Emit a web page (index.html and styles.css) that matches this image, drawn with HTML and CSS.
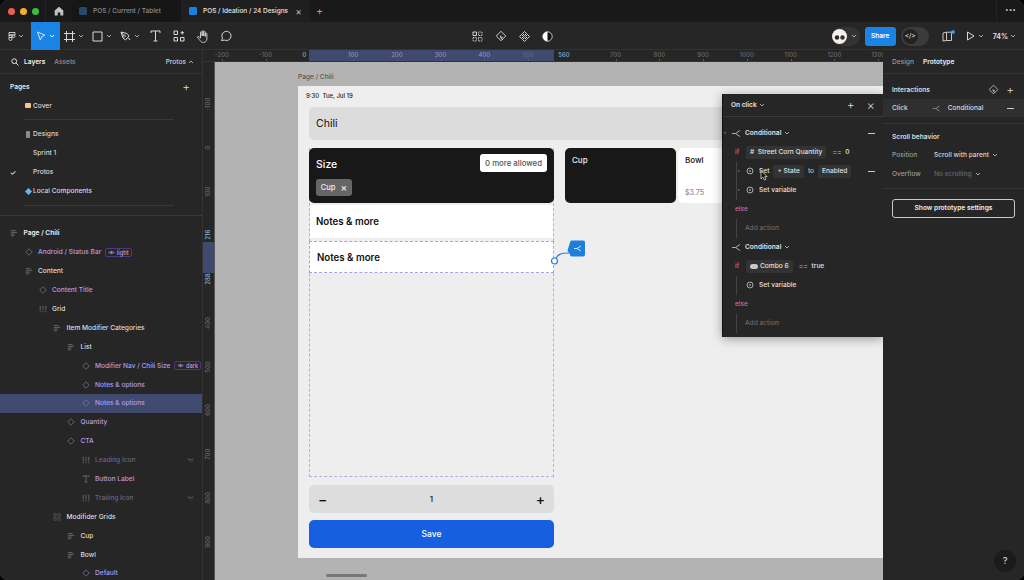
FILE: index.html
```html
<!DOCTYPE html>
<html lang="en">
<head>
    <meta charset="UTF-8">
    <title>POS / Ideation / 24 Designs</title>
    <link rel="stylesheet" href="styles.css">
</head>
<body>
    <svg class="defs" width="0" height="0">
        <symbol id="chev" viewBox="0 0 6 6"><path d="M1 2l2 2 2-2" fill="none" stroke="currentColor"/></symbol>
        <symbol id="diamond" viewBox="0 0 10 10"><path d="M5 .9L9.100 5 5 9.100.9 5z" fill="none" stroke="currentColor" stroke-width=".8"/></symbol>
        <symbol id="list" viewBox="0 0 10 10"><path d="M1 2h6M1 4.200h8M1 6.400h5M1 8.500h4" fill="none" stroke="currentColor" stroke-width=".8"/></symbol>
        <symbol id="bars" viewBox="0 0 10 10"><path d="M1.500 1v8M5 1v8M8.500 1v8" fill="none" stroke="currentColor" stroke-width=".8" stroke-dasharray="5 1"/></symbol>
        <symbol id="grid" viewBox="0 0 10 10"><path d="M1 1h3v3H1zM6 1h3v3H6zM1 6h3v3H1zM6 6h3v3H6z" fill="none" stroke="currentColor" stroke-width=".8" stroke-dasharray="1 .7"/></symbol>
        <symbol id="tee" viewBox="0 0 10 10"><path d="M1.500 2.500V1.200h7v1.300M5 1.200v7.600M3.500 8.800h3" fill="none" stroke="currentColor" stroke-width=".8"/></symbol>
        <symbol id="eye" viewBox="0 0 10 10"><path d="M1 5q4-4 8 0-4 4-8 0z" fill="none" stroke="currentColor" stroke-width=".8"/><circle cx="5" cy="5" r="1.300" fill="currentColor"/></symbol>
        <symbol id="hide" viewBox="0 0 10 6"><path d="M1 1q4 4 8 0M2 3l-1 1M5 4v1.500M8 3l1 1" fill="none" stroke="currentColor" stroke-width=".8"/></symbol>
        <symbol id="split" viewBox="0 0 12 10"><path d="M1 5h4l5-3.500M5 5l5 3.500" fill="none" stroke="currentColor" stroke-width=".9"/></symbol>
        <symbol id="action" viewBox="0 0 10 10"><circle cx="5" cy="5" r="3.700" fill="none" stroke="currentColor" stroke-width=".9"/><circle cx="5" cy="5" r="1" fill="currentColor"/></symbol>
        <symbol id="resize" viewBox="0 0 14 14"><path d="M7 1.500L12.500 7 7 12.500 1.500 7z" fill="none" stroke="currentColor"/><path d="M9 8.500H6.500V6.500M6.500 8.500l2.500 3" fill="none" stroke="currentColor"/></symbol>
    </svg>

    <div class="app">
        <div class="titlebar">
            <div class="lights"><i class="red"></i><i class="yellow"></i><i class="green"></i></div>
            <div class="home">
                <svg width="10" height="10" viewBox="0 0 10 10"><path d="M5 .8L9.300 4.500V9.500H6.300V6.500H3.700V9.500H.7V4.500z" fill="#c4c4c4"/></svg>
            </div>
            <div class="tab">
                <span class="file dim"></span><span>POS / Current / Tablet</span>
            </div>
            <div class="tab active">
                <span class="file"></span><span>POS / Ideation / 24 Designs</span><b class="close">&times;</b>
            </div>
            <div class="newtab">+</div>
            <div class="more">&middot;&middot;&middot;</div>
        </div>

        <div class="toolbar">
            <div class="tools">
                <div class="tool t-main">
                    <svg width="8" height="11" viewBox="0 0 8 11"><path d="M1 1.500h6v2.500H1zM1 4h3v2.500H1zM4 5.250a1.500 1.300 0 1 0 3 0 1.500 1.300 0 1 0-3 0M1 6.500h3v1.500a1.500 1.500 0 0 1-3 0z" fill="none" stroke="#d8d8d8" stroke-width=".9"/></svg>
                    <svg class="chev"><use href="#chev"/></svg>
                </div>
                <div class="tool t-move">
                    <svg width="10" height="10" viewBox="0 0 10 10"><path d="M1.500 1l7.500 3.300-3.200 1.300L4.300 9z" fill="none" stroke="#cfe6fb"/></svg>
                    <svg class="chev"><use href="#chev"/></svg>
                </div>
                <div class="tool t-w">
                    <svg width="11" height="11" viewBox="0 0 11 11"><path d="M2.500 0v11M8.500 0v11M0 2.500h11M0 8.500h11" fill="none" stroke="#d8d8d8"/></svg>
                    <svg class="chev"><use href="#chev"/></svg>
                </div>
                <div class="tool t-w">
                    <svg width="11" height="11" viewBox="0 0 11 11"><path d="M1 1h9v9H1z" fill="none" stroke="#d8d8d8"/></svg>
                    <svg class="chev"><use href="#chev"/></svg>
                </div>
                <div class="tool t-w">
                    <svg width="11" height="11" viewBox="0 0 11 11"><path d="M1 1l6 1.500 2 2.500-3.500 4-2.500-2zM1 1l3 3.500M8 6.500l2 2.500" fill="none" stroke="#d8d8d8"/><circle cx="4.500" cy="5" r="1" fill="none" stroke="#d8d8d8" stroke-width=".7"/></svg>
                    <svg class="chev"><use href="#chev"/></svg>
                </div>
                <div class="tool t-n">
                    <svg width="11" height="12" viewBox="0 0 11 12"><path d="M1 3V1h9v2M5.500 1v10M3.500 11h4" fill="none" stroke="#d8d8d8"/></svg>
                </div>
                <div class="tool t-n">
                    <svg width="12" height="12" viewBox="0 0 12 12"><path d="M1 1h3.500v3.500H1zM1 7.500h3.500V11H1zM7.500 7.500H11V11H7.500zM9.250 1v3.500M7.500 2.750H11" fill="none" stroke="#d8d8d8"/></svg>
                </div>
                <div class="tool t-n">
                    <svg width="12" height="13" viewBox="0 0 12 13"><path d="M3.500 7V2.500a.8.8 0 0 1 1.600 0V6V1.500a.8.8 0 0 1 1.600 0V6V2.300a.8.8 0 0 1 1.600 0V6.500V4a.8.8 0 0 1 1.600 0v5c0 2-1.500 3.400-3.500 3.400-2.500 0-3-1.500-6-5.400.6-.8 1.700-.4 3.100 1z" fill="none" stroke="#d8d8d8" stroke-width=".9"/></svg>
                </div>
                <div class="tool t-n">
                    <svg width="12" height="12" viewBox="0 0 12 12"><path d="M1.500 10.500l1-2.200a4.600 4.600 0 1 1 2 1.800z" fill="none" stroke="#d8d8d8"/></svg>
                </div>
            </div>
            <div class="center-tools">
                <svg width="11" height="11" viewBox="0 0 11 11"><path d="M1 1h3.500v3.500H1z" fill="none" stroke="#e8e8e8" stroke-width=".9"/><path d="M6.500 1H10v3.500H6.500zM1 6.500h3.500V10H1zM6.500 6.500H10V10H6.500z" fill="none" stroke="#e8e8e8" stroke-width=".9" stroke-dasharray="1 .8"/></svg>
                <svg class="ic-light" width="12" height="12"><use href="#resize"/></svg>
                <svg width="11" height="11" viewBox="0 0 11 11"><path d="M5.500.5l2 2-2 2-2-2zM5.500 6.500l2 2-2 2-2-2zM2.500 3.500l2 2-2 2-2-2zM8.500 3.500l2 2-2 2-2-2z" fill="none" stroke="#e8e8e8" stroke-width=".9"/></svg>
                <svg width="11" height="11" viewBox="0 0 11 11"><circle cx="5.500" cy="5.500" r="4.700" fill="#111" stroke="#eee" stroke-width=".8"/><path d="M5.500.8a4.700 4.700 0 0 0 0 9.400z" fill="#fff"/></svg>
            </div>
            <div class="right-tools">
                <div class="avatar-pill">
                    <svg width="15" height="15" viewBox="0 0 15 15"><circle cx="7.500" cy="7.500" r="7.500" fill="#f2f0ec"/><circle cx="5" cy="8.500" r="2.200" fill="#2b2622"/><circle cx="10.500" cy="8.500" r="2.200" fill="#3a2f25"/></svg>
                    <svg class="chev"><use href="#chev"/></svg>
                </div>
                <div class="share">Share</div>
                <div class="code-toggle"><span>&lt;/&gt;</span></div>
                <div class="library">
                    <svg width="12" height="11" viewBox="0 0 12 11"><path d="M1 2l3.500-.8v8.300L1 10zM4.500 1.200H9.500V9.500H4.500" fill="none" stroke="#d8d8d8" stroke-width=".9"/></svg>
                    <i></i>
                </div>
                <div class="play">
                    <svg width="9" height="10" viewBox="0 0 9 10"><path d="M1.500 1l6.500 4-6.500 4z" fill="none" stroke="#d8d8d8"/></svg>
                    <svg class="chev"><use href="#chev"/></svg>
                </div>
                <div class="zoomval">74%<svg class="chev"><use href="#chev"/></svg></div>
            </div>
        </div>

        <div class="workspace">
            <aside class="left">
                <div class="left-tabs">
                    <svg width="8" height="8" viewBox="0 0 8 8"><circle cx="3.200" cy="3.200" r="2.400" fill="none" stroke="#ddd"/><path d="M5 5l2.500 2.500" stroke="#ddd"/></svg>
                    <b>Layers</b><span>Assets</span>
                    <em>Protos</em><svg class="chev flip"><use href="#chev"/></svg>
                </div>
                <div class="pages">
                    <div class="pages-head"><b>Pages</b><span class="plus">+</span></div>
                    <div class="page"><i class="pic cover"></i>Cover</div>
                    <div class="page-sep"></div>
                    <div class="page"><i class="pic phone"></i>Designs</div>
                    <div class="page">Sprint 1</div>
                    <div class="page"><i class="tick">&#10003;</i>Protos</div>
                    <div class="page"><i class="pic comp"></i>Local Components</div>
                    <div class="page-sep"></div>
                </div>
                <div class="layers">
                    <div class="row l0 strong"><svg><use href="#list"/></svg>Page / Chili</div>
                    <div class="row l1 inst"><svg><use href="#diamond"/></svg>Android / Status Bar<span class="mode"><svg><use href="#eye"/></svg>light</span></div>
                    <div class="row l1"><svg><use href="#list"/></svg>Content</div>
                    <div class="row l2 inst"><svg><use href="#diamond"/></svg>Content Title</div>
                    <div class="row l2"><svg><use href="#bars"/></svg>Grid</div>
                    <div class="row l3"><svg><use href="#list"/></svg>Item Modifier Categories</div>
                    <div class="row l4"><svg><use href="#list"/></svg>List</div>
                    <div class="row l5 inst"><svg><use href="#diamond"/></svg>Modifier Nav / Chili Size<span class="mode"><svg><use href="#eye"/></svg>dark</span></div>
                    <div class="row l5 inst"><svg><use href="#diamond"/></svg>Notes &amp; options</div>
                    <div class="row l5 inst sel"><svg><use href="#diamond"/></svg>Notes &amp; options</div>
                    <div class="row l4 inst"><svg><use href="#diamond"/></svg>Quantity</div>
                    <div class="row l4 inst"><svg><use href="#diamond"/></svg>CTA</div>
                    <div class="row l5 off"><svg><use href="#bars"/></svg>Leading Icon<svg class="hidden-ic"><use href="#hide"/></svg></div>
                    <div class="row l5 inst"><svg><use href="#tee"/></svg>Button Label</div>
                    <div class="row l5 off"><svg><use href="#bars"/></svg>Trailing Icon<svg class="hidden-ic"><use href="#hide"/></svg></div>
                    <div class="row l3"><svg><use href="#grid"/></svg>Modifider Grids</div>
                    <div class="row l4"><svg><use href="#list"/></svg>Cup</div>
                    <div class="row l4"><svg><use href="#list"/></svg>Bowl</div>
                    <div class="row l5 inst"><svg><use href="#diamond"/></svg>Default</div>
                </div>
            </aside>

            <div class="stage">
                <div class="ruler-top">
                    <span class="sel-band"></span>
                    <span>-200</span><span>-100</span><span class="blue zero">0</span><span class="on">100</span><span class="on">200</span><span class="on">300</span><span class="on">400</span><span class="faint">500</span><span class="blue end">560</span><span>700</span><span>800</span><span>900</span><span>1000</span><span>1100</span><span>1200</span><span>1300</span>
                </div>
                <div class="stage-body">
                    <div class="ruler-left">
                        <span class="sel-band"></span>
                        <span>-100</span><span>0</span><span>100</span><span class="blue">216</span><span class="blue">288</span><span>400</span><span>500</span><span>600</span><span>700</span><span>800</span><span>900</span><span></span>
                    </div>
                    <div class="canvas">
                        <div class="frame-label">Page / Chili</div>
                        <div class="frame">
                            <div class="status">9:30&nbsp; Tue, Jul 19</div>
                            <div class="title-card">Chili</div>
                            <div class="grid">
                                <div class="col">
                                    <div class="categories">
                                        <div class="size-card">
                                            <div class="size-top"><span>Size</span><span class="allowed">0 more allowed</span></div>
                                            <div class="chip">Cup<i>&times;</i></div>
                                        </div>
                                        <div class="notes">Notes &amp; more</div>
                                        <div class="notes picked">Notes &amp; more</div>
                                        <svg class="noodle" width="36" height="26" viewBox="0 0 36 26">
                                            <path d="M6 21c2-7 6-8 14-8" fill="none" stroke="#1b7fe0" stroke-width="1.200"/>
                                            <circle cx="5.500" cy="21" r="3" fill="#fff" stroke="#1b7fe0" stroke-width="1.200"/>
                                            <path d="M21 2.500a2 2 0 0 1 2-2h11a2 2 0 0 1 2 2v12a2 2 0 0 1-2 2H23a2 2 0 0 1-2-2l-2.500-4z" fill="#1b7fe0"/>
                                            <path d="M25 8.500h3l4-2.500M28 8.500l4 2.500" fill="none" stroke="#fff" stroke-width=".8"/>
                                        </svg>
                                    </div>
                                    <div class="qty"><b>&minus;</b><span>1</span><b>+</b></div>
                                    <div class="save">Save</div>
                                </div>
                                <div class="options">
                                    <div class="opt dark">Cup</div>
                                    <div class="opt"><span>Bowl</span><small>$3.75</small></div>
                                </div>
                            </div>
                        </div>
                        <div class="hscroll"></div>

                        <div class="popup">
                            <div class="pop-head"><b>On click</b><svg class="chev"><use href="#chev"/></svg><span class="plus">+</span><span class="x">&times;</span></div>
                            <div class="pop-body">
                                <div class="prow cond"><i class="tri down"></i><svg class="split"><use href="#split"/></svg><b>Conditional</b><svg class="chev"><use href="#chev"/></svg><span class="minus"></span></div>
                                <div class="prow"><span class="kw">if</span><span class="pill"># &nbsp;Street Corn Quantity</span><span class="op">==</span><span>0</span></div>
                                <div class="guide">
                                    <div class="prow act"><i class="tri"></i><svg><use href="#action"/></svg><span class="set">Set</span><span class="pill">+ State</span><span class="to">to</span><span class="pill">Enabled</span><span class="minus"></span>
                                        <svg class="cursor" width="8" height="11" viewBox="0 0 8 11"><path d="M1 1v8l2-1.800L4.500 10 6 9.300 4.700 6.600H7.300z" fill="#111" stroke="#eee" stroke-width=".7"/></svg>
                                    </div>
                                    <div class="prow act"><i class="tri"></i><svg><use href="#action"/></svg><span>Set variable</span></div>
                                </div>
                                <div class="prow"><span class="kw">else</span></div>
                                <div class="guide"><div class="prow add">Add action</div></div>
                                <div class="prow cond"><svg class="split"><use href="#split"/></svg><b>Conditional</b><svg class="chev"><use href="#chev"/></svg></div>
                                <div class="prow"><span class="kw">if</span><span class="pill"><i class="toggle"></i>Combo 6</span><span class="op">==</span><span>true</span></div>
                                <div class="guide"><div class="prow act"><svg><use href="#action"/></svg><span>Set variable</span></div></div>
                                <div class="prow"><span class="kw">else</span></div>
                                <div class="guide"><div class="prow add">Add action</div></div>
                            </div>
                        </div>
                    </div>
                </div>
            </div>

            <aside class="right">
                <div class="right-tabs"><span>Design</span><b>Prototype</b></div>
                <div class="interactions">
                    <div class="r-head"><b>Interactions</b><svg width="11" height="11"><use href="#resize"/></svg><span class="plus">+</span></div>
                    <div class="click-row"><span>Click</span><svg class="split"><use href="#split"/></svg><em>Conditional</em><span class="minus"></span></div>
                </div>
                <div class="scroll-sec">
                    <b>Scroll behavior</b>
                    <div class="prop"><span>Position</span><em>Scroll with parent</em><svg class="chev"><use href="#chev"/></svg></div>
                    <div class="prop off"><span>Overflow</span><em>No scrolling</em><svg class="chev"><use href="#chev"/></svg></div>
                </div>
                <div class="settings"><div class="settings-btn">Show prototype settings</div></div>
                <div class="help">?</div>
            </aside>
        </div>
    </div>
</body>
</html>
```

FILE: styles.css
```css
* {
    box-sizing: border-box;
}
html, body {
    margin: 0;
    height: 100%;
    background: #000;
    overflow: hidden;
}
body {
    font-family: Inter, "Liberation Sans", sans-serif;
    font-size: 6.600px;
    font-weight: 500;
    color: #e6e6e6;
    white-space: nowrap;
}
b, em, i, small {
    font-style: normal;
    font-weight: inherit;
}
svg {
    flex: none;
    display: block;
}
.defs {
    position: absolute;
}
.chev {
    width: 6px;
    height: 6px;
    color: #a8a8a8;
}
.plus {
    font-size: 12px;
    font-weight: 300;
    line-height: 1;
    color: #ddd;
}
.minus {
    width: 7px;
    height: 1px;
    background: #ccc;
}
.app {
    width: 1024px;
    height: 580px;
    border-radius: 7px;
    overflow: hidden;
    background: #262626;
    display: flex;
    flex-direction: column;
}

/* title bar */
.titlebar {
    height: 22px;
    background: #191919;
    display: flex;
    align-items: stretch;
    color: #8a8f96;
    font-size: 6.500px;
}
.lights {
    width: 46px;
    display: flex;
    align-items: center;
    gap: 5px;
    padding-left: 8px;
    border-right: 1px solid #242424;
}
.lights i {
    width: 7px;
    height: 7px;
    border-radius: 50%;
}
.lights .red { background: #ee5f57; }
.lights .yellow { background: #f4b02d; }
.lights .green { background: #35c13f; }
.home {
    width: 26px;
    display: flex;
    align-items: center;
    padding-left: 8px;
}
.tab {
    width: 109px;
    display: flex;
    align-items: center;
    gap: 5px;
    padding-left: 7px;
    background: #161616;
}
.tab.active {
    width: 129px;
    padding-left: 8px;
    background: #1f1f1f;
    color: #e8e8e8;
}
.file {
    width: 8px;
    height: 8px;
    border-radius: 1.500px;
    background: #1783e0;
    margin-right: 1px;
}
.file.dim {
    background: #27496b;
}
.close {
    font-size: 10px;
    font-weight: 400;
    margin-left: 2px;
    color: #bbb;
}
.newtab {
    margin-left: 6px;
    font-size: 11px;
    font-weight: 300;
    color: #bbb;
    line-height: 22px;
}
.more {
    margin-left: auto;
    width: 28px;
    border-left: 1px solid #242424;
    font-size: 11px;
    font-weight: 700;
    color: #ddd;
    line-height: 20px;
    text-align: center;
}

/* toolbar */
.toolbar {
    height: 28px;
    background: #262626;
    display: grid;
    grid-template-columns: 1fr auto 1fr;
    border-bottom: 1px solid #333;
}
.tools, .center-tools, .right-tools {
    display: flex;
    align-items: center;
}
.tool {
    height: 28px;
    display: flex;
    align-items: center;
    justify-content: center;
    gap: 2px;
}
.t-main { width: 31px; }
.t-move { width: 29px; background: #1a84e6; gap: 3px; }
.t-move .chev { color: #fff; }
.t-w { width: 28px; gap: 3px; }
.t-n { width: 23.500px; }
.center-tools {
    gap: 12px;
}
.ic-light {
    color: #e8e8e8;
}
.right-tools {
    justify-content: flex-end;
    padding-right: 8px;
}
.avatar-pill {
    width: 28px;
    height: 19px;
    border-radius: 10px;
    background: #333;
    display: flex;
    align-items: center;
    gap: 4px;
}
.share {
    width: 31px;
    height: 19px;
    margin-left: 5px;
    border-radius: 3px;
    background: #1a84e6;
    color: #fff;
    font-weight: 600;
    text-align: center;
    line-height: 19px;
}
.code-toggle {
    width: 28px;
    height: 19px;
    margin-left: 5px;
    border-radius: 10px;
    background: #3b3b3b;
    padding: 2px;
}
.code-toggle span {
    display: block;
    width: 15px;
    height: 15px;
    border-radius: 50%;
    background: #222;
    color: #ddd;
    font-size: 6.500px;
    text-align: center;
    line-height: 15px;
}
.library {
    margin-left: 13px;
    position: relative;
}
.library i {
    position: absolute;
    top: -1px;
    right: -1px;
    width: 4px;
    height: 4px;
    border-radius: 50%;
    background: #2d9bf0;
}
.play {
    margin-left: 12px;
    display: flex;
    align-items: center;
    gap: 3px;
}
.zoomval {
    margin-left: 9px;
    display: flex;
    align-items: center;
    gap: 2px;
    font-weight: 600;
    font-size: 7px;
}

/* main area */
.workspace {
    flex: 1;
    display: flex;
    min-height: 0;
}
.left {
    width: 203px;
    background: #262626;
    border-right: 1px solid #333;
    overflow: hidden;
}
.left-tabs {
    height: 24px;
    display: flex;
    align-items: center;
    padding: 0 8px 0 11px;
    border-bottom: 1px solid #333;
    color: #8f8f8f;
}
.left-tabs b {
    margin-left: 5px;
    margin-right: 9px;
    color: #eee;
    font-weight: 600;
}
.left-tabs em {
    margin-left: auto;
    margin-right: 2px;
    color: #cfcfcf;
}
.flip {
    transform: scaleY(-1);
}
.pages {
    height: 142px;
    border-bottom: 1px solid #3a3a3a;
    overflow: hidden;
}
.pages-head {
    height: 22px;
    display: flex;
    align-items: center;
    justify-content: space-between;
    padding: 4px 12px 0 10px;
    font-weight: 600;
}
.page {
    height: 19px;
    display: flex;
    align-items: center;
    padding-left: 33px;
    position: relative;
    color: #d8d8d8;
}
.page-sep {
    height: 0;
    margin: 4px 28px 4.500px 24px;
    border-top: 1px solid #383838;
}
.pic {
    position: absolute;
    left: 25px;
    top: 6px;
    width: 6px;
    height: 6px;
}
.pic.cover { background: #f3c78d; border-radius: 1px; height: 5px; top: 7px; }
.pic.phone { background: #8b8b8b; border-radius: 1px; height: 7px; left: 26px; width: 4px; top: 6px; }
.pic.comp { background: #69b8ea; transform: rotate(45deg); width: 5px; height: 5px; top: 7px; left: 26px; }
.tick {
    position: absolute;
    left: 10px;
    font-size: 7px;
    color: #eee;
}
.layers {
    padding-top: 8px;
}
.row {
    height: 18.900px;
    display: flex;
    align-items: center;
    gap: 5.500px;
    color: #dedede;
}
.row > svg:first-child {
    width: 8px;
    height: 8px;
    color: #8a8a8a;
}
.l0 { padding-left: 10px; }
.l1 { padding-left: 24.500px; }
.l2 { padding-left: 38.500px; }
.l3 { padding-left: 53px; }
.l4 { padding-left: 67px; }
.l5 { padding-left: 81.500px; }
.strong {
    color: #f2f2f2;
    font-weight: 600;
}
.inst {
    color: #b49be8;
}
.off {
    color: #6c6480;
}
.row.off > svg:first-child, .row.inst > svg:first-child {
    color: #8f82a8;
}
.sel {
    background: #40496e;
}
.mode {
    display: flex;
    align-items: center;
    gap: 1.500px;
    height: 9px;
    margin-left: -1.500px;
    padding: 0 2px;
    border: 1px solid #4c3a79;
    border-radius: 2px;
    font-size: 5.800px;
}
.mode svg {
    width: 7px;
    height: 7px;
}
.hidden-ic {
    width: 7px;
    height: 4px;
    margin-left: auto;
    margin-right: 8px;
    color: #8a8a8a;
}

/* rulers and canvas */
.stage {
    flex: 1;
    min-width: 0;
    display: flex;
    flex-direction: column;
}
.ruler-top {
    height: 12px;
    flex: none;
    position: relative;
    display: flex;
    background: #262626;
    border-bottom: 1px solid #333;
    color: #666;
    font-size: 6px;
    line-height: 10px;
    overflow: hidden;
}
.ruler-top span {
    width: 43.750px;
    flex: none;
    text-align: center;
    position: relative;
}
.ruler-top span::after {
    content: "";
    position: absolute;
    left: 50%;
    bottom: 0;
    width: 1px;
    height: 2px;
    background: #5a5a5a;
}
.ruler-top span:nth-child(2) {
    margin-left: -3px;
}
.ruler-top .sel-band {
    position: absolute;
    left: 106px;
    top: 0;
    bottom: 0;
    width: 245px;
    background: #40496e;
}
.ruler-top .sel-band::after, .ruler-top .zero::after, .ruler-top .end::after {
    display: none;
}
.ruler-top .zero {
    left: -5px;
}
.ruler-top .end {
    left: -8px;
}
.ruler-top .on {
    color: #8c96ba;
}
.blue {
    color: #7fb4d8;
}
.ruler-top .blue {
    color: #7fb4d8;
}
.ruler-top .faint {
    color: #5f678a;
}
.stage-body {
    flex: 1;
    min-height: 0;
    display: flex;
}
.ruler-left {
    width: 12px;
    flex: none;
    position: relative;
    padding-top: 20px;
    background: #262626;
    border-right: 1px solid #555;
    color: #666;
    font-size: 6px;
    display: flex;
    flex-direction: column;
    overflow: hidden;
}
.ruler-left span {
    height: 43.750px;
    flex: none;
    writing-mode: vertical-rl;
    transform: rotate(180deg);
    text-align: center;
    line-height: 10px;
}
.ruler-left .blue {
    color: #7fb4d8;
}
.ruler-left .sel-band {
    position: absolute;
    left: 0;
    top: 180px;
    width: 12px;
    height: 31px;
    background: #40496e;
    transform: none;
}
.canvas {
    flex: 1;
    min-width: 0;
    position: relative;
    overflow: hidden;
    background: #b3b3b3;
    padding: 11px 0 0 83px;
}
.frame-label {
    height: 13px;
    color: #565656;
    font-size: 6.600px;
    line-height: 9px;
}
.frame {
    width: 640px;
    height: 472px;
    padding: 0 0 0 11px;
    background: #eee;
    color: #111;
}
.status {
    height: 21px;
    margin-left: -3px;
    font-size: 6px;
    line-height: 19px;
    color: #222;
}
.title-card {
    height: 33px;
    padding-left: 7px;
    border-radius: 5px;
    background: #dcdcdc;
    font-size: 10.500px;
    line-height: 33px;
    font-weight: 400;
}
.grid {
    margin-top: 8px;
    display: flex;
    gap: 11px;
}
.col {
    width: 245px;
}
.categories {
    height: 329px;
    position: relative;
    border: 1px dashed #bda9ea;
    border-top: 0;
}
.size-card {
    height: 55px;
    margin: 0 -1px;
    padding: 8px 7px;
    border-radius: 5px;
    background: #181818;
    color: #fff;
}
.size-top {
    display: flex;
    justify-content: space-between;
    align-items: center;
    font-size: 10.500px;
}
.allowed {
    width: 67px;
    height: 18px;
    border-radius: 3px;
    background: #fff;
    color: #555;
    font-size: 7.800px;
    line-height: 18px;
    text-align: center;
    margin-top: -2px;
}
.chip {
    width: 36px;
    height: 17px;
    margin-top: 7px;
    border-radius: 3px;
    background: #666;
    color: #eee;
    font-size: 7.500px;
    line-height: 17px;
    display: flex;
    justify-content: center;
    gap: 5px;
}
.chip i {
    font-size: 10px;
}
.notes {
    height: 33px;
    margin: 2px 0 0;
    padding-left: 6px;
    background: #fff;
    font-size: 9.700px;
    font-weight: 600;
    line-height: 34px;
}
.notes.picked {
    height: 32px;
    margin: 3px -1px 0;
    padding-left: 7px;
    border: 1px dashed #b09ae2;
    line-height: 31px;
}
.noodle {
    position: absolute;
    left: 239px;
    top: 92px;
}
.qty {
    height: 28px;
    margin-top: 8px;
    padding: 0 9px;
    border-radius: 5px;
    background: #ddd;
    display: flex;
    justify-content: space-between;
    align-items: center;
    font-size: 8px;
}
.qty b {
    font-size: 14px;
    font-weight: 500;
}
.save {
    height: 28px;
    margin-top: 7px;
    border-radius: 5px;
    background: #155fe0;
    color: #fff;
    font-size: 8.500px;
    line-height: 28px;
    text-align: center;
}
.options {
    display: flex;
    gap: 2px;
}
.opt {
    width: 111px;
    height: 55px;
    padding: 7px 7px;
    border-radius: 5px;
    background: #fff;
    font-size: 8px;
    position: relative;
}
.opt.dark {
    background: #181818;
    color: #eee;
}
.opt small {
    position: absolute;
    left: 7px;
    bottom: 6px;
    color: #8d8d8d;
    font-size: 7px;
}
.hscroll {
    position: absolute;
    left: 111px;
    top: 512px;
    width: 41px;
    height: 3px;
    border-radius: 2px;
    background: #777;
}

/* floating interaction panel */
.popup {
    position: absolute;
    left: 507px;
    top: 32px;
    width: 161px;
    height: 243px;
    background: #262626;
    border-left: 1px solid #111;
    box-shadow: 0 2px 10px rgba(0, 0, 0, .35);
}
.pop-head {
    height: 23px;
    display: flex;
    align-items: center;
    gap: 2px;
    padding: 0 8px;
    border-bottom: 1px solid #3a3a3a;
    font-weight: 600;
}
.pop-head .plus {
    margin-left: auto;
    margin-right: 10px;
}
.pop-head .x {
    font-size: 13px;
    font-weight: 300;
    line-height: 1;
    color: #ccc;
}
.pop-body {
    padding: 6.500px 8px 0 12px;
}
.prow {
    height: 19px;
    display: flex;
    align-items: center;
    gap: 4px;
    position: relative;
    color: #e0e0e0;
}
.prow .minus {
    position: absolute;
    right: 0;
    top: 9px;
}
.cond {
    gap: 3px;
    margin-left: -4px;
    font-weight: 600;
}
.split {
    width: 11px;
    height: 9px;
    color: #d0d0d0;
}
.tri {
    position: absolute;
    left: -8px;
    top: 8px;
    border-left: 2px solid #777;
    border-top: 1.500px solid transparent;
    border-bottom: 1.500px solid transparent;
}
.tri.down {
    left: -7px;
    border-left: 1.500px solid transparent;
    border-right: 1.500px solid transparent;
    border-top: 2px solid #777;
    border-bottom: 0;
}
.kw {
    min-width: 7px;
    color: #c76ba4;
}
.pill {
    height: 13px;
    padding: 0 4px;
    border-radius: 2px;
    background: #333;
    line-height: 13px;
    display: flex;
    align-items: center;
}
.op {
    margin-left: 2px;
    color: #c76ba4;
    font-weight: 700;
}
.toggle {
    width: 8px;
    height: 5px;
    margin-right: 2px;
    border-radius: 3px;
    background: #c8c8c8;
}
.guide {
    margin-left: 1px;
    padding-left: 9px;
    border-left: 1px solid #444;
}
.act > svg:first-of-type {
    width: 8px;
    height: 8px;
    margin-right: 1px;
    color: #ddd;
}
.to {
    color: #bbb;
}
.cursor {
    position: absolute;
    left: 14px;
    top: 8px;
}
.add {
    margin-left: -1px;
    color: #6a6a6a;
}

/* right panel */
.right {
    width: 141px;
    flex: none;
    position: relative;
    background: #262626;
    z-index: 1;
    color: #dcdcdc;
}
.right-tabs {
    height: 24px;
    display: flex;
    align-items: center;
    gap: 9px;
    padding-left: 9px;
    border-bottom: 1px solid #333;
    color: #9a9a9a;
}
.right-tabs b {
    color: #eee;
    font-weight: 600;
}
.interactions {
    height: 50px;
    border-bottom: 1px solid #333;
}
.r-head {
    height: 25px;
    padding: 6px 10px 0 9px;
    display: flex;
    align-items: center;
    font-weight: 600;
}
.r-head svg {
    margin-left: auto;
    margin-right: 7px;
    color: #ccc;
}
.click-row {
    height: 18px;
    padding: 0 10px 0 9px;
    background: #2f2f2f;
    display: flex;
    align-items: center;
}
.click-row .split {
    margin: 0 7px 0 24px;
    width: 9px;
    color: #aaa;
}
.click-row .minus {
    margin-left: auto;
}
.scroll-sec {
    height: 65px;
    padding: 9px 9px 0;
    border-bottom: 1px solid #333;
}
.scroll-sec b {
    font-weight: 600;
}
.prop {
    height: 19px;
    display: flex;
    align-items: center;
    gap: 3px;
    color: #9a9a9a;
}
.prop:first-of-type {
    margin-top: 4px;
}
.prop span {
    width: 39px;
}
.prop em {
    color: #d8d8d8;
}
.prop.off em {
    color: #666;
}
.settings {
    padding: 10px 9px;
}
.settings-btn {
    height: 19px;
    border: 1px solid #c8c8c8;
    border-radius: 3px;
    color: #eee;
    font-weight: 600;
    line-height: 17px;
    text-align: center;
}
.help {
    position: absolute;
    right: 8px;
    bottom: 8px;
    width: 22px;
    height: 22px;
    border-radius: 50%;
    background: #1b1b1b;
    color: #ddd;
    font-size: 9px;
    line-height: 22px;
    text-align: center;
}
```
